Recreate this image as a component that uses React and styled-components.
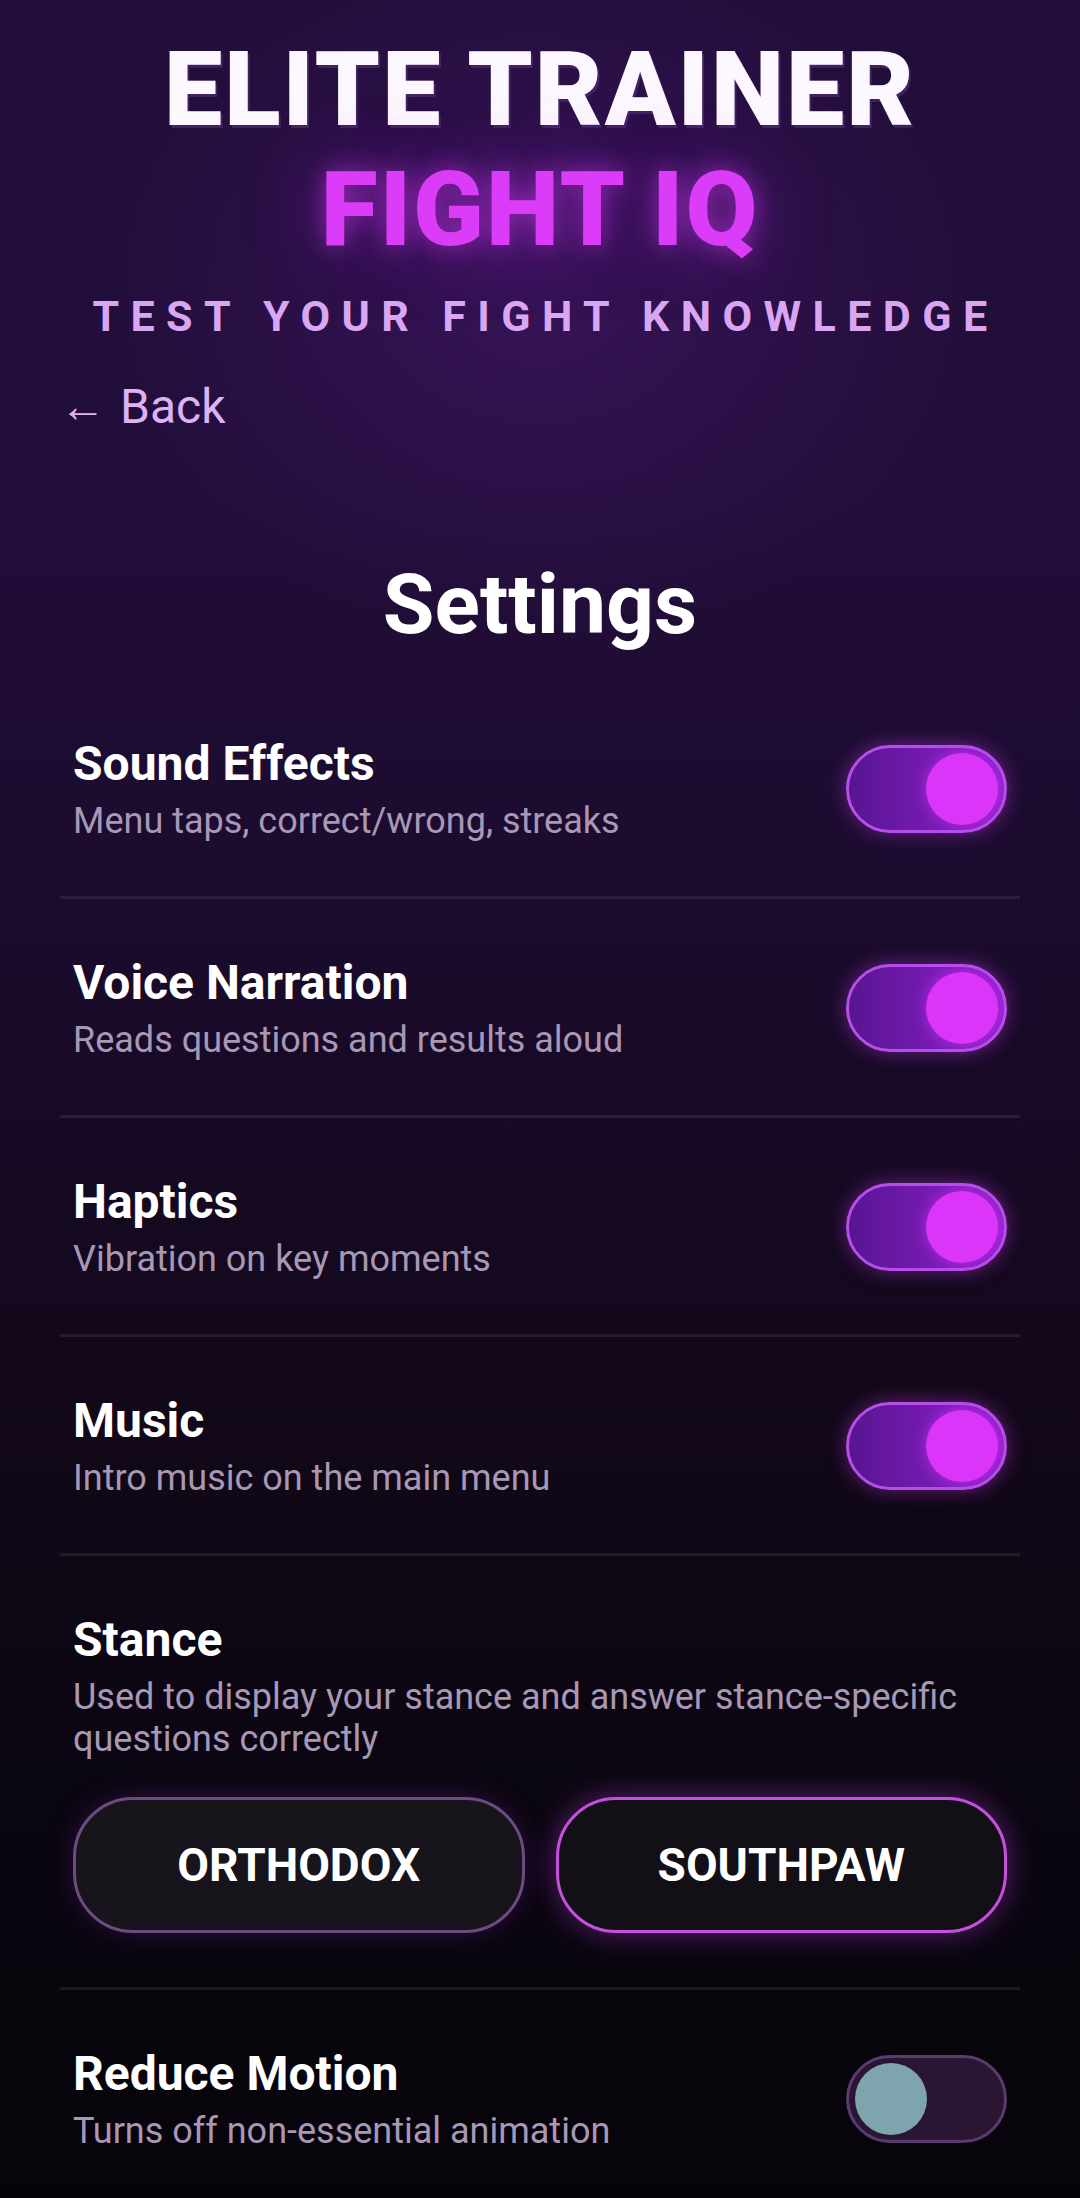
import React, { useState } from 'react';
import styled, { createGlobalStyle, css } from 'styled-components';

const GlobalStyle = createGlobalStyle`
  html, body {
    margin: 0;
    padding: 0;
    background: #07050b;
  }
  body {
    font-family: Roboto, "Liberation Sans", sans-serif;
    color: #fff;
    -webkit-font-smoothing: antialiased;
  }
  * { box-sizing: border-box; }
`;

const S = {};

S.Page = styled.div`
  min-height: 2198px;
  padding: 30px 60px 48px;
  background:
    radial-gradient(ellipse 640px 520px at 50% 280px, rgba(72, 24, 112, 0.55), rgba(72, 24, 112, 0) 70%),
    linear-gradient(180deg, #210d39 0%, #220e3a 22%, #1a0b2c 42%, #120819 62%, #0a0610 80%, #06040a 100%);
`;

S.Header = styled.header`
  display: flex;
  flex-direction: column;
  align-items: center;
  text-align: center;
`;

S.Brand = styled.h1`
  margin: 0;
  font-size: 104px;
  line-height: 120px;
  font-weight: 900;
  letter-spacing: 2px;
  color: ${p => p.accent ? '#da3cf8' : '#fdf8ff'};
  text-shadow: ${p => p.accent
    ? '0 0 24px rgba(218, 60, 248, 0.55), 0 0 70px rgba(170, 40, 230, 0.55)'
    : '2px 3px 0 rgba(120, 70, 160, 0.35)'};
`;

S.Tagline = styled.div`
  margin-top: 21px;
  font-size: 43px;
  line-height: 50px;
  font-weight: 700;
  letter-spacing: 11.4px;
  margin-right: -11px;
  color: #d9a6f2;
`;

S.Back = styled.a`
  align-self: flex-start;
  margin-top: 37px;
  font-size: 48px;
  line-height: 56px;
  font-weight: 400;
  color: #deb3f5;
  text-decoration: none;
  cursor: pointer;
`;

S.Arrow = styled.span`
  font-size: 46px;
  margin-right: 14px;
  vertical-align: 1px;
`;

S.Title = styled.h2`
  margin: 119px 0 25px;
  font-size: 84px;
  line-height: 101px;
  font-weight: 700;
  text-align: center;
  color: #fff;
`;

S.List = styled.div`
  display: flex;
  flex-direction: column;
`;

S.Row = styled.div`
  display: flex;
  flex-direction: ${p => p.stacked ? 'column' : 'row'};
  align-items: ${p => p.stacked ? 'stretch' : 'center'};
  justify-content: space-between;
  gap: 24px;
  padding: 56px 13px 54px;
  border-bottom: ${p => p.last ? 'none' : '3px solid rgba(255, 255, 255, 0.08)'};
`;

S.Text = styled.div`
  display: flex;
  flex-direction: column;
  gap: 9px;
  min-width: 0;
`;

S.Label = styled.div`
  font-size: 48px;
  line-height: 55px;
  font-weight: 700;
  color: #fff;
`;

S.Hint = styled.div`
  font-size: 36px;
  line-height: 42px;
  font-weight: 400;
  color: #a898b6;
`;

S.Switch = styled.button`
  flex: none;
  display: flex;
  align-items: center;
  justify-content: ${p => p.on ? 'flex-end' : 'flex-start'};
  width: 161px;
  height: 88px;
  padding: 0 6px;
  border-radius: 44px;
  cursor: pointer;
  ${p => p.on ? css`
    border: 3px solid #b64fe9;
    background: linear-gradient(90deg, #571590 0%, #7a1cb8 60%, #8f22cc 100%);
    box-shadow: 0 0 20px rgba(200, 60, 240, 0.45);
  ` : css`
    border: 3px solid #5b3a6e;
    background: #2a1633;
  `}
`;

S.Knob = styled.span`
  width: 72px;
  height: 72px;
  border-radius: 50%;
  ${p => p.on ? css`
    background: #da35f8;
    box-shadow: 0 0 14px rgba(218, 53, 248, 0.6);
  ` : css`
    background: #7ea5ad;
  `}
`;

S.Choices = styled.div`
  display: grid;
  grid-template-columns: 1fr 1fr;
  gap: 31px;
  margin-top: 13px;
`;

S.Choice = styled.button`
  height: 136px;
  border-radius: 60px;
  font-family: Roboto, "Liberation Sans", sans-serif;
  font-size: 46px;
  font-weight: 700;
  color: #fff;
  cursor: pointer;
  ${p => p.active ? css`
    border: 3px solid #c451de;
    background: #130f17;
    box-shadow: 0 0 30px rgba(190, 60, 230, 0.45);
  ` : css`
    border: 3px solid #6c4c80;
    background: #18141c;
    box-shadow: 0 0 26px rgba(110, 30, 150, 0.35);
  `}
`;

const settings = [
  { key: 'sfx', label: 'Sound Effects', hint: 'Menu taps, correct/wrong, streaks' },
  { key: 'voice', label: 'Voice Narration', hint: 'Reads questions and results aloud' },
  { key: 'haptics', label: 'Haptics', hint: 'Vibration on key moments' },
  { key: 'music', label: 'Music', hint: 'Intro music on the main menu' },
];

const Toggle = ({ on, onClick }) => (
  <S.Switch on={on ? 1 : 0} onClick={onClick} aria-pressed={on}>
    <S.Knob on={on ? 1 : 0} />
  </S.Switch>
);

export default function App() {
  const [values, setValues] = useState({ sfx: true, voice: true, haptics: true, music: true, motion: false });
  const [stance, setStance] = useState('southpaw');

  const flip = key => setValues(v => ({ ...v, [key]: !v[key] }));

  return (
    <S.Page>
      <GlobalStyle />
      <S.Header>
        <S.Brand>ELITE TRAINER</S.Brand>
        <S.Brand accent={1}>FIGHT IQ</S.Brand>
        <S.Tagline>TEST YOUR FIGHT KNOWLEDGE</S.Tagline>
        <S.Back><S.Arrow>←</S.Arrow>Back</S.Back>
      </S.Header>

      <S.Title>Settings</S.Title>

      <S.List>
        {settings.map(s => (
          <S.Row key={s.key}>
            <S.Text>
              <S.Label>{s.label}</S.Label>
              <S.Hint>{s.hint}</S.Hint>
            </S.Text>
            <Toggle on={values[s.key]} onClick={() => flip(s.key)} />
          </S.Row>
        ))}

        <S.Row stacked={1}>
          <S.Text>
            <S.Label>Stance</S.Label>
            <S.Hint>Used to display your stance and answer stance-specific questions correctly</S.Hint>
          </S.Text>
          <S.Choices>
            <S.Choice active={stance === 'orthodox' ? 1 : 0} onClick={() => setStance('orthodox')}>ORTHODOX</S.Choice>
            <S.Choice active={stance === 'southpaw' ? 1 : 0} onClick={() => setStance('southpaw')}>SOUTHPAW</S.Choice>
          </S.Choices>
        </S.Row>

        <S.Row last={1}>
          <S.Text>
            <S.Label>Reduce Motion</S.Label>
            <S.Hint>Turns off non-essential animation</S.Hint>
          </S.Text>
          <Toggle on={values.motion} onClick={() => flip('motion')} />
        </S.Row>
      </S.List>
    </S.Page>
  );
}
